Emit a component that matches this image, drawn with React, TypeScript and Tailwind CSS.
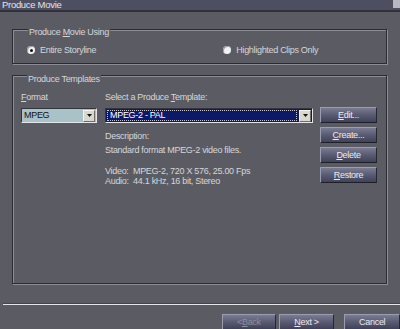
// Produce Movie — wizard step: choose what to render and with which template
const font = { fontFamily: '"Liberation Sans", Arial, sans-serif' };

function Radio({ checked, label, className = '' }: { checked?: boolean; label: React.ReactNode; className?: string }) {
  return (
    <div className={`flex items-center h-[10px] ${className}`}>
      <span className="w-[8px] h-[8px] rounded-full bg-[#f2f2f2] shadow-[inset_1px_1px_0_#9a9aa0] flex items-center justify-center shrink-0">
        {checked && <span className="w-[3px] h-[3px] rounded-full bg-[#111]" />}
      </span>
      <span className="ml-[5px] text-[#d6d6da]">{label}</span>
    </div>
  );
}

function DropArrow() {
  return (
    <span className="w-[12px] h-[12px] bg-[#d8d8cc] border-t border-l border-[#f4f4ec] border-r border-b border-r-[#6e6e66] border-b-[#6e6e66] flex items-center justify-center shrink-0">
      <svg width="5" height="3" viewBox="0 0 5 3">
        <path d="M0 0h5L2.5 3z" fill="#111" />
      </svg>
    </span>
  );
}

function Btn({ children, className = '', disabled }: { children: React.ReactNode; className?: string; disabled?: boolean }) {
  return (
    <div
      className={`h-[16px] flex items-center justify-center bg-gradient-to-b from-[#7a7c93] via-[#595b73] to-[#404259] border-t border-l border-[#9a9cb0] border-r border-b border-r-[#26272f] border-b-[#1f2027] ${
        disabled ? 'text-[#8c8e9e]' : 'text-[#ececf0]'
      } ${className}`}
    >
      {children}
    </div>
  );
}

const u = (s: string) => <span className="underline">{s}</span>;

export default function App() {
  return (
    <div
      style={font}
      className="w-[400px] h-[329px] overflow-hidden bg-[#5b5c63] text-[9px] tracking-[-0.3px] leading-[11px] flex flex-col"
    >
      {/* title bar */}
      <div className="h-[12px] shrink-0 bg-[#4d4f61] border-b-2 border-[#30313b] flex items-start justify-between">
        <span className="ml-[2px] text-[#e4e4ea] text-[9.5px] leading-[10px]">Produce Movie</span>
        <span className="w-[7px] h-[8px] bg-[#b8b8c0]" />
      </div>

      {/* Produce Movie Using */}
      <div className="relative mt-[17px] ml-[12px] mr-[13px] h-[35px] shrink-0 border border-[#2b2c33] shadow-[1px_1px_0_#8c8d95,inset_1px_1px_0_#8c8d95]">
        <span className="absolute top-[-3px] left-[15px] px-[1px] bg-[#5b5c63] text-[#d6d6da]">
          Produce {u('M')}ovie Using
        </span>
        <div className="flex mt-[15px]">
          <Radio checked className="ml-[14px]" label="Entire Storyline" />
          <Radio className="ml-[127px]" label="Highlighted Clips Only" />
        </div>
      </div>

      {/* Produce Templates */}
      <div className="relative mt-[11px] ml-[12px] mr-[13px] h-[209px] shrink-0 border border-[#2b2c33] shadow-[1px_1px_0_#8c8d95,inset_1px_1px_0_#8c8d95]">
        <span className="absolute top-[-2px] left-[14px] px-[1px] bg-[#5b5c63] text-[#d6d6da]">
          Produce Templates
        </span>
        <div className="flex pl-[8px] pt-[16px] text-[#d6d6da]">
          <div className="w-[76px] flex flex-col">
            <span>{u('F')}ormat</span>
            <div className="mt-[5px] h-[15px] bg-[#a9c2c8] border-t border-l border-[#34353c] border-r border-b border-r-[#e6e6ea] border-b-[#e6e6ea] flex items-center justify-between pl-[2px] pr-[1px]">
              <span className="text-[#111]">MPEG</span>
              <DropArrow />
            </div>
          </div>
          <div className="ml-[8px] w-[208px] flex flex-col">
            <span>Select a Produce {u('T')}emplate:</span>
            <div className="mt-[5px] h-[15px] bg-[#0c1868] border-t border-l border-[#34353c] border-r border-b border-r-[#e6e6ea] border-b-[#e6e6ea] flex items-center justify-between pl-[1px] pr-[1px]">
              <span className="h-[11px] flex-1 mr-[2px] border border-dotted border-[#c8c8d8] text-white pl-[2px] leading-[9px]">
                MPEG-2 - PAL
              </span>
              <DropArrow />
            </div>
            <span className="mt-[8px]">Description:</span>
            <span className="mt-[3px]">Standard format MPEG-2 video files.</span>
            <span className="mt-[10px] leading-[10px]">Video:&nbsp; MPEG-2, 720 X 576, 25.00 Fps</span>
            <span className="leading-[10px]">Audio:&nbsp; 44.1 kHz, 16 bit, Stereo</span>
          </div>
          <div className="ml-[7px] w-[57px] mt-[15px] flex flex-col gap-[4px]">
            <Btn>{u('E')}dit...</Btn>
            <Btn>{u('C')}reate...</Btn>
            <Btn>{u('D')}elete</Btn>
            <Btn>{u('R')}estore</Btn>
          </div>
        </div>
      </div>

      {/* separator */}
      <div className="mt-[19px] ml-[3px] h-[2px] shrink-0 border-t border-[#44454c] bg-[#e6e6ea]" />

      {/* wizard buttons */}
      <div className="mt-[9px] ml-[222px] flex shrink-0">
        <Btn disabled className="w-[55px]">&lt; {u('B')}ack</Btn>
        <Btn className="ml-[3px] w-[57px]">{u('N')}ext &gt;</Btn>
        <Btn className="ml-[10px] w-[57px]">Cancel</Btn>
      </div>
    </div>
  );
}
